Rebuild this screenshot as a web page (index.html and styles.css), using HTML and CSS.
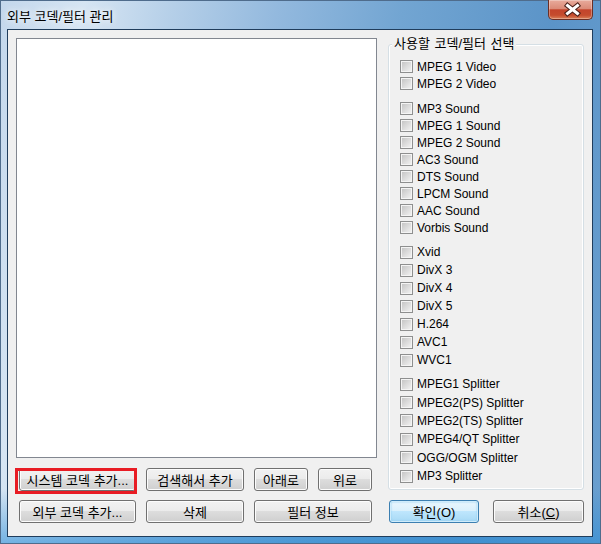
FILE: index.html
```html
<!DOCTYPE html>
<html lang="ko">
<head>
    <meta charset="UTF-8">
    <title>외부 코덱/필터 관리</title>
    <link rel="stylesheet" href="styles.css">
</head>
<body>
    <div class="window">
        <div class="titlebar">
            <span class="title">외부 코덱/필터 관리</span>
            <button class="close-btn">
                <svg width="45" height="19" viewBox="0 0 45 19">
                    <path d="M19.5 5.5 L29.5 13.5 M29.5 5.5 L19.5 13.5" stroke="#4a1f18" stroke-width="5" stroke-linecap="square" fill="none"/>
                    <path d="M19.5 5.5 L29.5 13.5 M29.5 5.5 L19.5 13.5" stroke="#ffffff" stroke-width="3" stroke-linecap="square" fill="none"/>
                </svg>
            </button>
        </div>
        <div class="client">
            <div class="left-col">
                <div class="listbox"></div>
                <div class="left-buttons">
                    <button class="btn marked">시스템 코덱 추가...</button>
                    <button class="btn">검색해서 추가</button>
                    <button class="btn">아래로</button>
                    <button class="btn">위로</button>
                    <button class="btn">외부 코덱 추가...</button>
                    <button class="btn">삭제</button>
                    <button class="btn wide">필터 정보</button>
                </div>
            </div>
            <div class="right-col">
                <div class="group">
                    <span class="group-title">사용할 코덱/필터 선택</span>
                    <div class="section s1">
                        <label class="check"><span class="box"></span>MPEG 1 Video</label>
                        <label class="check"><span class="box"></span>MPEG 2 Video</label>
                    </div>
                    <div class="section s2">
                        <label class="check"><span class="box"></span>MP3 Sound</label>
                        <label class="check"><span class="box"></span>MPEG 1 Sound</label>
                        <label class="check"><span class="box"></span>MPEG 2 Sound</label>
                        <label class="check"><span class="box"></span>AC3 Sound</label>
                        <label class="check"><span class="box"></span>DTS Sound</label>
                        <label class="check"><span class="box"></span>LPCM Sound</label>
                        <label class="check"><span class="box"></span>AAC Sound</label>
                        <label class="check"><span class="box"></span>Vorbis Sound</label>
                    </div>
                    <div class="section s3">
                        <label class="check"><span class="box"></span>Xvid</label>
                        <label class="check"><span class="box"></span>DivX 3</label>
                        <label class="check"><span class="box"></span>DivX 4</label>
                        <label class="check"><span class="box"></span>DivX 5</label>
                        <label class="check"><span class="box"></span>H.264</label>
                        <label class="check"><span class="box"></span>AVC1</label>
                        <label class="check"><span class="box"></span>WVC1</label>
                    </div>
                    <div class="section s4">
                        <label class="check"><span class="box"></span>MPEG1 Splitter</label>
                        <label class="check"><span class="box"></span>MPEG2(PS) Splitter</label>
                        <label class="check"><span class="box"></span>MPEG2(TS) Splitter</label>
                        <label class="check"><span class="box"></span>MPEG4/QT Splitter</label>
                        <label class="check"><span class="box"></span>OGG/OGM Splitter</label>
                        <label class="check"><span class="box"></span>MP3 Splitter</label>
                    </div>
                </div>
                <div class="dialog-buttons">
                    <button class="btn default ok">확인(O)</button>
                    <button class="btn cancel">취소(<u>C</u>)</button>
                </div>
            </div>
        </div>
    </div>
</body>
</html>
```

FILE: styles.css
```css
*, *::before, *::after {
    box-sizing: border-box;
}
body {
    margin: 0;
    padding: 0;
    font-family: "Liberation Sans", "Noto Sans CJK KR", sans-serif;
    font-size: 12px;
    color: #000;
    background: #fff;
}
.window {
    width: 601px;
    height: 544px;
    border: 1px solid #4f6c8c;
    padding: 0 7px 6px 6px;
    display: flex;
    flex-direction: column;
    background:
        linear-gradient(to bottom, rgba(255, 255, 255, 0) 0, rgba(255, 255, 255, 0) 90%, rgba(40, 140, 215, 0.55) 100%),
        linear-gradient(100deg, #c3d7ec 0%, #d6e5f3 12%, #b5cfe8 25%, #93b9de 40%, #72a5d2 58%, #5b94c8 80%, #6a9fcf 100%);
}
.titlebar {
    height: 28px;
    display: flex;
    justify-content: space-between;
    align-items: flex-start;
}
.title {
    font-size: 13px;
    line-height: 31px;
    color: #000;
    text-shadow: 0 0 6px rgba(255, 255, 255, 0.9), 0 0 10px rgba(255, 255, 255, 0.7);
}
.close-btn {
    margin-top: -1px;
    width: 45px;
    height: 20px;
    padding: 0;
    border: 1px solid #6b2f25;
    border-top: none;
    border-radius: 0 0 5px 5px;
    background: linear-gradient(to bottom, #e8ab9c 0%, #db8b78 45%, #c3442b 52%, #c54c2e 80%, #da8159 100%);
    box-shadow: inset 0 0 0 1px rgba(255, 255, 255, 0.3);
}
.close-btn svg {
    display: block;
    margin: -1px 0 0 -1px;
}
.client {
    flex: 1;
    display: flex;
    gap: 11px;
    padding: 8px 8px 0 8px;
    border: 1px solid #203d5c;
    background-color: #f0f0f0;
}
.left-col {
    width: 361px;
    display: flex;
    flex-direction: column;
}
.listbox {
    height: 420px;
    border: 1px solid #828790;
    background-color: #fff;
}
.left-buttons {
    margin-top: 10px;
    padding-left: 3px;
    display: grid;
    grid-template-columns: 117px 98px 54px 54px;
    grid-auto-rows: 23px;
    column-gap: 10px;
    row-gap: 9px;
}
.btn {
    position: relative;
    height: 23px;
    padding: 0;
    font-family: "Liberation Sans", "Noto Sans CJK KR", sans-serif;
    font-size: 13px;
    color: #000;
    border: 1px solid #707070;
    border-radius: 3px;
    background: linear-gradient(to bottom, #f2f2f2 0%, #ebebeb 50%, #dddddd 50%, #cfcfcf 100%);
    box-shadow: inset 0 0 0 1px #fcfcfc;
}
.btn u {
    text-decoration: underline;
}
.wide {
    grid-column: span 2;
}
.marked::after {
    content: "";
    position: absolute;
    left: -5px;
    top: -1px;
    width: 122px;
    height: 26px;
    border: 3px solid #e81c24;
}
.right-col {
    width: 196px;
    display: flex;
    flex-direction: column;
}
.group {
    position: relative;
    margin-top: 6px;
    height: 446px;
    padding: 13px 0 0 11px;
    border: 1px solid #d5dfe5;
    border-radius: 3px;
    box-shadow: inset 0 0 0 1px #fff;
}
.group-title {
    position: absolute;
    top: -9px;
    left: 3px;
    padding: 0 2px;
    font-size: 13px;
    line-height: 16px;
    background-color: #f0f0f0;
    word-spacing: 1px;
}
.section {
    display: flex;
    flex-direction: column;
}
.check {
    display: flex;
    align-items: center;
    white-space: nowrap;
}
.s1 .check, .s2 .check {
    height: 17px;
}
.s2 {
    margin-top: 8px;
}
.s3 {
    margin-top: 7px;
}
.s3 .check {
    height: 18px;
}
.s4 {
    margin-top: 6px;
}
.s4 .check {
    height: 18.4px;
}
.box {
    width: 13px;
    height: 13px;
    margin-right: 4px;
    padding: 1px;
    border: 1px solid #8e8f8f;
    background: linear-gradient(135deg, #c6c6c6, #f0f0f0) content-box, #f4f4f4;
}
.dialog-buttons {
    margin-top: 10px;
    padding-left: 1px;
    display: flex;
    gap: 14px;
}
.ok {
    width: 90px;
}
.cancel {
    width: 91px;
}
.default {
    border-color: #3c7fb1;
    background: linear-gradient(to bottom, #eaf6fd 0%, #d9f0fc 50%, #bee6fd 50%, #a7d9f5 100%);
    box-shadow: inset 0 0 0 1px #cfecfb, inset 0 0 2px 1px #88cbee;
}
```
